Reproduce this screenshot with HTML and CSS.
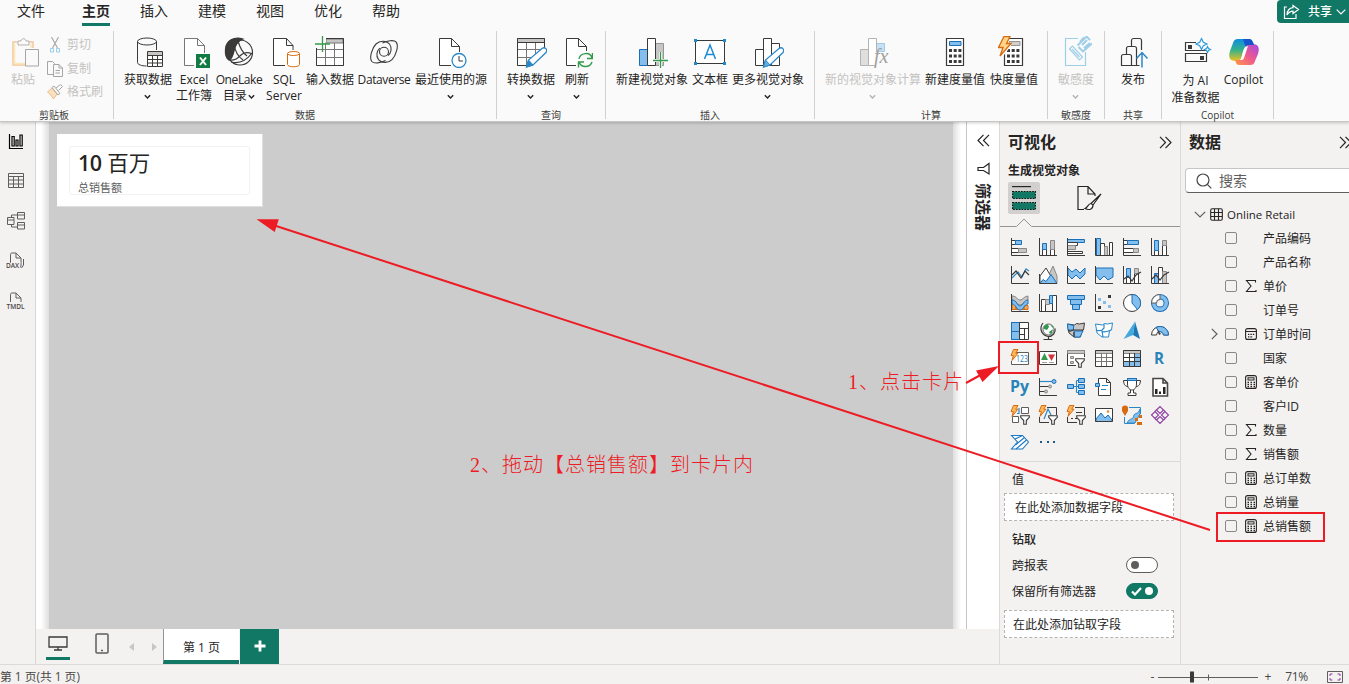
FILE: index.html
```html
<!DOCTYPE html>
<html lang="zh-CN">
<head>
<meta charset="utf-8">
<title>Power BI</title>
<link rel="stylesheet" href="styles.css">
</head>
<body>
<svg class="defs" width="0" height="0" aria-hidden="true">
  <symbol id="bolt" viewBox="0 0 9 12"><path d="M3.500.5h4.500L5.700 4.200H8L2 11.400 3.400 6.600H1z" fill="#ffb85a" stroke="#d86b10"/></symbol>
  <symbol id="calc" viewBox="0 0 12 14"><rect x=".6" y=".6" width="10.8" height="12.8" rx="2" fill="none" stroke="#252423" stroke-width="1.1"/><rect x="3" y="2.8" width="6" height="2.2" fill="none" stroke="#252423"/><path d="M2.500 7.500h7.500M2.500 9.600h7.500M2.500 11.600h7.500" stroke="#252423" stroke-width="1.3" stroke-dasharray="1.5"/></symbol>
  <symbol id="sigma" viewBox="0 0 12 14"><path d="M10.500 3.500V1.500H1.500L6 7 1.500 12.500h9.500v-1.500" fill="none" stroke="#252423" stroke-width="1.1"/></symbol>
  <symbol id="chev" viewBox="0 0 6 5"><path d="M.7 1L3 3.400 5.300 1" fill="none" stroke="currentColor" stroke-width="1.200"/></symbol>
  <symbol id="dbl" viewBox="0 0 13 13"><path d="M1 .8l5.500 5.700L1 12.200M6.500.8L12 6.500l-5.500 5.700" fill="none" stroke="#252423" stroke-width="1.200"/></symbol>
  <symbol id="funnel" viewBox="0 0 10 10"><path d="M.7.7h8.600v1.600L6.300 5.500v3.800H3.700V5.500L.7 2.300z" fill="#fff" stroke="#3b3a39" stroke-width="1.100"/></symbol>
</svg>

<header class="top">
  <nav class="tabs">
    <span class="tab first">文件</span><span class="tab on">主页</span><span class="tab">插入</span><span class="tab">建模</span><span class="tab">视图</span><span class="tab">优化</span><span class="tab">帮助</span>
    <div class="share">
      <svg width="17" height="16" viewBox="0 0 17 16" fill="none" stroke="#fff" stroke-width="1.200"><path d="M4 3H1.500v11.500H13V10"/><path d="M10 1.500l5.500 4-5.500 4V7.200C7 7.200 5.500 8.500 4 11c.2-4 2.500-7 6-7.300z"/></svg>
      <b>共享</b>
      <svg width="10" height="6" viewBox="0 0 10 6" fill="none" stroke="#fff" stroke-width="1.200"><path d="M.7.7L5 5 9.300.7"/></svg>
    </div>
  </nav>
  <div class="ribbon">
    <section class="group g-clip">
      <div class="tools">
        <div class="btn w34 off">
          <svg width="32" height="32" viewBox="0 0 32 32" fill="none"><path d="M10.500 6H6v23h13M21 6h5v6" stroke="#f3c79b" stroke-width="1.500"/><path d="M7.500 8v19.500H19M24 8v4" stroke="#fbe6b8" stroke-width="1.500"/><path d="M11 9V5h3c.5-3 4.500-3 5 0h3v4z" stroke="#b5b3b1" fill="#fafafa"/><path d="M18.500 13.500h13v16.500h-13z" stroke="#a8a6a4" fill="#fafafa"/></svg>
          <span>粘贴</span>
        </div>
        <div class="minis">
          <div><svg width="16" height="16" viewBox="0 0 16 16" fill="none"><path d="M4.500 0l6 11M11.500 0l-6 11" stroke="#a8a6a4" stroke-width="1.100"/><path d="M3.500 11.500h3v3.500h-3zM9.500 11.500h3v3.500h-3z" stroke="#9dcbea"/></svg>剪切</div>
          <div><svg width="16" height="16" viewBox="0 0 16 16" fill="#fafafa" stroke="#a8a6a4"><path d="M.5.5h5l2 2v11h-7z"/><path d="M6.500 3.500h5.500l3.500 3.500v8.500h-9zM12 3.500V7h3.500M8.500 9.500h4.500M8.500 12h4.500"/></svg>复制</div>
          <div><svg width="16" height="16" viewBox="0 0 16 16" fill="none" stroke="#a8a6a4"><path d="M5 4l5 6-3.500 5C4.500 12 3 10 .5 8z" fill="#fbe0bd" stroke="#edbd91"/><path d="M5 3.500l2-1.500 6 7.500-2 1.500zM9 4L13.500.5l2 2L11.500 6.500"/></svg>格式刷</div>
        </div>
      </div>
      <h6>剪贴板</h6>
    </section>

    <section class="group g-data">
      <div class="tools">
        <div class="btn w52">
          <svg width="32" height="32" viewBox="0 0 32 32" fill="none" stroke="#3b3a39"><path d="M5.500 5.500v21c0 2 4 3.500 9 3.500M24.500 5.500V14"/><ellipse cx="15" cy="5.500" rx="9.500" ry="3.500"/><path d="M15.500 15.500h15v15h-15z" fill="#fff"/><path d="M16 16h14v3H16z" fill="#c8c6c4" stroke="none"/><path d="M15.500 19.500h15M15.500 23.500h15M15.500 27h15M20.500 19.500v11M25.500 19.500v11"/></svg>
          <span>获取数据</span><svg class="ch" width="7" height="6"><use href="#chev"/></svg>
        </div>
        <div class="btn w40">
          <svg width="32" height="32" viewBox="0 0 32 32" fill="none" stroke="#797775"><path d="M16 29.500H6.500v-27h13l7 7V17M19.500 2.500v7h7" fill="#fff"/><path d="M18 18h14v14H18z" fill="#107c41" stroke="none"/><path d="M22 21.500l6 7.500M28 21.500L22 29" stroke="#fff" stroke-width="2"/></svg>
          <span>Excel<br>工作簿</span>
        </div>
        <div class="btn w50 lat">
          <svg width="32" height="32" viewBox="0 0 32 32" fill="none" stroke="#3b3a39" stroke-width="1.200"><circle cx="17" cy="16.500" r="12.500"/><path d="M20 3C11 0 3 5 2.500 13c-.5 5 .5 9 3.500 11 3-1 4-5 5-9 1-5 4-10 9-12z" fill="#3b3a39"/><path d="M11 8c1 7 3 12 9 16M15 5c2 7 5 12 9 15M6 24c6 1 9-2 12-5s7-3 11.500-1"/><path d="M8 26c8 2 15-1 21-9"/></svg>
          <span>OneLake<br>目录 <svg width="7" height="6"><use href="#chev"/></svg></span>
        </div>
        <div class="btn w40">
          <svg width="32" height="32" viewBox="0 0 32 32" fill="none" stroke="#3b3a39"><path d="M17 29.500H5.500v-27h13l6.500 7V14M18.500 2.500v7H25" fill="#fff"/><path d="M19.500 17.500v11c0 3 12 3 12 0v-11" fill="#fff" stroke="#d86b10"/><ellipse cx="25.500" cy="17.500" rx="6" ry="2" fill="#fff" stroke="#d86b10"/></svg>
          <span>SQL<br>Server</span>
        </div>
        <div class="btn w52">
          <svg width="32" height="32" viewBox="0 0 32 32" fill="none" stroke="#797775"><path d="M2.500 2.500h27v27h-27z" fill="#fff"/><path d="M12 3h17v4H12z" fill="#c8c6c4"/><path d="M2.500 13.500h27M2.500 21.500h27M11.500 7v22M20.500 7v22"/><path d="M2.500 2.500h27v27h-27z" stroke="#3b3a39"/><path d="M0 0h12v6.500H7V12H0z" fill="#fafafa" stroke="none"/><path d="M8.500 0v16M1 8h15" stroke="#359a4b" stroke-width="1.300"/></svg>
          <span>输入数据</span>
        </div>
        <div class="btn w56 lat">
          <svg width="32" height="32" viewBox="0 0 32 32" fill="none" stroke="#3b3a39" stroke-width="1.100"><circle cx="16" cy="15.800" r="4.500"/><path id="lobe" d="M17.500 24.500C13 27 6 28 3.800 25.500 1 22 4 12 8 8c3.500-3.500 10-4 13.500 0 3 4 1.500 9.500-1.500 11.500"/><use href="#lobe" transform="rotate(180 16 15.800)"/></svg>
          <span>Dataverse</span>
        </div>
        <div class="btn w78">
          <svg width="32" height="32" viewBox="0 0 32 32" fill="none" stroke="#3b3a39"><path d="M16 29.500H4.500v-27h12l8 8V16M16.500 2.500v8h8" fill="#fff"/><circle cx="24" cy="24.500" r="7" fill="#fff" stroke="#2b88c8" stroke-width="1.300"/><path d="M24 20v5h4"/></svg>
          <span>最近使用的源</span><svg class="ch" width="7" height="6"><use href="#chev"/></svg>
        </div>
      </div>
      <h6>数据</h6>
    </section>

    <section class="group g-query">
      <div class="tools">
        <div class="btn w52">
          <svg width="32" height="32" viewBox="0 0 32 32" fill="none" stroke="#797775"><path d="M2.500 2.500h27v27h-27z" fill="#fff"/><path d="M3 3h26v3.500H3z" fill="#c8c6c4" stroke="none"/><path d="M2.500 13.500h27M2.500 21.500h27M11.500 7v22M20.500 7v22"/><path d="M2.500 2.500h27v27h-27zM2.500 6.500h27" stroke="#3b3a39"/><path d="M16 30.500h16V14z" fill="#fafafa" stroke="none"/><path d="M11.500 31l2-7L27 12.500c3-2 6 1 4 4L18 29z" fill="#fff" stroke="#2b88c8" stroke-width="1.300"/><path d="M11.500 31l2-7 4.500 5z" fill="#2b88c8" stroke="#2b88c8"/></svg>
          <span>转换数据</span><svg class="ch" width="7" height="6"><use href="#chev"/></svg>
        </div>
        <div class="btn w40">
          <svg width="32" height="32" viewBox="0 0 32 32" fill="none" stroke="#3b3a39"><path d="M15 29.500H5.500v-27h12l8 8V15M17.500 2.500v8h8" fill="#fff"/><g stroke="#359a4b" stroke-width="1.400"><path d="M18 23c1-6 11-8 13-1M31.500 17v5.500H26M31 26c-2 6-11 6-13 0M17.500 31.500V26H23"/></g></svg>
          <span>刷新</span><svg class="ch" width="7" height="6"><use href="#chev"/></svg>
        </div>
      </div>
      <h6>查询</h6>
    </section>

    <section class="group g-insert">
      <div class="tools">
        <div class="btn w76">
          <svg width="32" height="32" viewBox="0 0 32 32" stroke="#3b3a39"><path d="M3.500 13.500h8v16h-8z" fill="#83beec" stroke="#1a70b8"/><path d="M19.500 7.500h8v22h-8z" fill="#c8c6c4" stroke="#979593"/><path d="M11.500 2.500h8v27h-8z" fill="#fff"/><path d="M24.500 16v16M16 24.500h16" stroke="#fafafa" stroke-width="3"/><path d="M24.500 16v16M17 24.500h15" stroke="#359a4b" stroke-width="1.300"/></svg>
          <span>新建视觉对象</span>
        </div>
        <div class="btn w40">
          <svg width="32" height="32" viewBox="0 0 32 32"><path d="M1.500 4.500h29v23h-29z" fill="#fff" stroke="#3b3a39"/><path d="M10.500 23L16 9l5.500 14M12.500 18.500h7" fill="none" stroke="#1b8ad3" stroke-width="1.500"/><path d="M0 3h3v3H0zM29 3h3v3h-3zM0 26h3v3H0zM29 26h3v3h-3z" fill="#1b8ad3"/></svg>
          <span>文本框</span>
        </div>
        <div class="btn w76">
          <svg width="32" height="32" viewBox="0 0 32 32" stroke="#3b3a39" fill="#fff"><path d="M3.500 13.500h8v16h-8zM19.500 7.500h8v22h-8zM11.500 2.500h8v27h-8z"/><path d="M11.500 31l2-7L27 12.500c3-2 6 1 4 4L18 29z" stroke="#2b88c8" stroke-width="1.300"/><path d="M11.500 31l2-7 4.500 5z" fill="#69afe5" stroke="#2b88c8"/></svg>
          <span>更多视觉对象</span><svg class="ch" width="7" height="6"><use href="#chev"/></svg>
        </div>
      </div>
      <h6>插入</h6>
    </section>

    <section class="group g-calc">
      <div class="tools">
        <div class="btn w100 off">
          <svg width="32" height="32" viewBox="0 0 32 32" stroke="#b5b3b1"><path d="M3.500 13.500h8v16h-8z" fill="#e1dfdd"/><path d="M19.500 7.500h8v8h-8z" fill="#c7e0f4" stroke="#9dcbea"/><path d="M11.500 2.500h8v27h-8z" fill="#fff"/><path d="M18 16h12v15H18z" fill="#fafafa" stroke="none"/><text x="17" y="27" class="fx">fx</text></svg>
          <span>新的视觉对象计算</span><svg class="ch" width="7" height="6"><use href="#chev"/></svg>
        </div>
        <div class="btn w64">
          <svg width="32" height="32" viewBox="0 0 32 32"><path d="M7.500 2.500h17v27h-17z" fill="#fff" stroke="#3b3a39" stroke-width="1.200"/><path d="M10.500 5.500h11.500v4H10.500z" fill="#83beec" stroke="#1a70b8"/><path d="M10 14.500h12.500M10 20h12.500M10 25.500h12.500" stroke="#3b3a39" stroke-width="3" stroke-dasharray="3 1.700"/></svg>
          <span>新建度量值</span>
        </div>
        <div class="btn w54">
          <svg width="32" height="32" viewBox="0 0 32 32"><path d="M6.500 2.500h18v27h-18z" fill="#fff" stroke="#3b3a39" stroke-width="1.200"/><path d="M11 5.500h11v4H11z" fill="#d2d0ce" stroke="#979593"/><path d="M9 14.500h13M9 20h13M9 25.500h13" stroke="#3b3a39" stroke-width="3" stroke-dasharray="3 1.700"/><path d="M0 0h11v7h2v3L6 19v1H0z" fill="#fafafa"/><path d="M6 .5h6L8.500 7.500h4.500L2 20l3-8.500H.5z" fill="#ffd58a" stroke="#d86b10" stroke-width="1.300"/></svg>
          <span>快度量值</span>
        </div>
      </div>
      <h6>计算</h6>
    </section>

    <section class="group g-sens">
      <div class="tools">
        <div class="btn w40 off">
          <svg width="32" height="32" viewBox="0 0 32 32" fill="none" stroke="#9dcfe8" stroke-width="1.200"><path d="M18 2.500H5.500v27h20V16"/><path d="M9.500 13l3-3 10 11-3 3zM12 13l7.500 8"/><path d="M17.500 9.500l9-9 3.500 3.500M18.500 11l4.500 4.500 9-8M22 9l5-5M24 12l6-5M20 6l4-4.500" stroke-width="2"/></svg>
          <span>敏感度</span><svg class="ch" width="7" height="6"><use href="#chev"/></svg>
        </div>
      </div>
      <h6>敏感度</h6>
    </section>

    <section class="group g-pub">
      <div class="tools">
        <div class="btn w40">
          <svg width="32" height="32" viewBox="0 0 32 32" fill="none" stroke="#3b3a39" stroke-width="1.200"><path d="M4.500 29.500v-9c0-1 1-2 2-2h6c1 0 2 1 2 2v9zM9.500 18v-5.500c0-1 1-2 2-2h6c1 0 2 1 2 2v17h-5M14.500 10V4.500c0-1 1-2 2-2h6c1 0 2 1 2 2V14M19.500 29.500h3"/><path d="M25 31.500V17M19.500 22.500l5.500-6 5.500 6" stroke="#2b88c8" stroke-width="1.500"/></svg>
          <span>发布</span>
        </div>
      </div>
      <h6>共享</h6>
    </section>

    <section class="group g-cop">
      <div class="tools">
        <div class="btn w52 ai">
          <svg width="32" height="32" viewBox="0 0 32 32" fill="none" stroke="#3b3a39" stroke-width="1.200"><path d="M16 6.500H5.500v8h21M5.500 17.500h21v8h-21z"/><path d="M8 9h4v4H8zM20 20h4v4h-4z" fill="#3b3a39" stroke="none"/><path d="M21.500 2.500l1.800 3.700 3.700 1.800-3.700 1.800-1.800 3.700-1.800-3.700L16 8l3.700-1.800zM27.500 10.500l1 2 2 1-2 1-1 2-1-2-2-1 2-1z" fill="#fafafa" stroke="#2b9bdc"/></svg>
          <span>为 AI<br>准备数据</span>
        </div>
        <div class="btn w44">
          <svg width="32" height="32" viewBox="0 0 32 32"><defs><linearGradient id="c1" x1="0" y1="0" x2="0" y2="1"><stop offset="0" stop-color="#0a8ee0"/><stop offset=".5" stop-color="#35b28a"/><stop offset="1" stop-color="#f4c11c"/></linearGradient><linearGradient id="c2" x1="1" y1="0" x2="0" y2="1"><stop offset="0" stop-color="#a348e8"/><stop offset=".5" stop-color="#ee5a8d"/><stop offset="1" stop-color="#ff9a45"/></linearGradient></defs><path d="M10 3h11c3 0 4 3 5 6h-6c-2 0-3 1-3.500 3L13 23c-1 3-3 2-5 2-6 0-8-3-6-10l3-8c1-3 2-4 5-4z" fill="url(#c1)"/><path d="M22 29H11c-3 0-3-3-4-5h4c2 0 3-1 3.500-3L18 11c1-3 3-3 6-3 6 0 8 3 6 10l-3 7c-1 3-2 4-5 4z" fill="url(#c2)"/><path d="M15 3h6c3 0 4 3 5 6h-6c-1 0-2 1-2.500 2z" fill="#1655ce"/><path d="M20 10l-4 12c-.6 2-1.800 2-4.500 2 2-1 2.500-4 3-7 .5-3 2-6 5.500-7z" fill="#fff"/></svg>
          <span>Copilot</span>
        </div>
      </div>
      <h6>Copilot</h6>
    </section>
  </div>
</header>

<main class="work">
  <aside class="rail">
    <svg width="20" height="20" viewBox="0 0 20 20" fill="none" stroke="#000" stroke-width="1.200"><path d="M3.500 3v14.500H17"/><path d="M6 5.500h2.200v9.500H6zM10 9h2v6h-2zM14 4h2.200v11H14z"/></svg>
    <svg width="20" height="20" viewBox="0 0 20 20" fill="none" stroke="#605e5c"><path d="M2.500 2.500h15v14h-15zM2.500 5.500h15M2.500 9h15M2.500 13h15M7.500 5.500v11M12.500 5.500v11"/></svg>
    <svg width="20" height="20" viewBox="0 0 20 20" fill="none" stroke="#605e5c"><path d="M1.500 6.500h6.500v7H1.500zM1.500 9h6.500M11.500 1.500h7v6.500h-7zM11.500 4h7M11.500 11.500h7v6.500h-7zM11.500 14h7M5.500 6.500V4h6M5.500 13.500V16h6"/></svg>
    <svg width="24" height="20" viewBox="0 0 24 20" fill="none" stroke="#605e5c"><path d="M6.500 12V3.500c0-1 .5-1.500 1.500-1.500h4l5 5v7c0 1.500-.5 3-2 3M12 2v5h5M19.500 8v6l-2 3"/><text class="tiny" x="2" y="17">DAX</text></svg>
    <svg width="24" height="20" viewBox="0 0 24 20" fill="none" stroke="#605e5c"><path d="M6.500 11V3.500c0-1 .5-1.500 1.500-1.500h4l5 5v4M12 2v5h5"/><text class="tiny" x="2.500" y="17.500">TMDL</text></svg>
  </aside>

  <div class="center">
    <div class="stage">
      <div class="canvas">
        <div class="card"><div class="card-in"><strong><b>10</b> 百万</strong><small>总销售额</small></div></div>
      </div>
      <div class="filters">
        <svg class="flip" width="13" height="13"><use href="#dbl"/></svg>
        <svg width="14" height="14" viewBox="0 0 14 14"><path d="M13 1.500v10.500L7.500 8.500H2v-3h5.500z" fill="none" stroke="#252423" stroke-width="1.200"/></svg>
        <b>筛选器</b>
      </div>
    </div>
    <div class="pages">
      <div class="dev on"><svg width="20" height="16" viewBox="0 0 20 16" fill="none" stroke="#3b3a39" stroke-width="1.300"><path d="M1 2h18v10H1zM10 12v3M6 15h8"/></svg></div>
      <div class="dev phone"><svg width="14" height="22" viewBox="0 0 14 22" fill="none" stroke="#605e5c" stroke-width="1.500"><rect x="1" y="1" width="12" height="19" rx="1"/><path d="M6 17.500h2"/></svg></div>
      <svg class="nav1" width="5" height="8" viewBox="0 0 5 8"><path d="M5 0v8L0 4z" fill="#c8c6c4"/></svg>
      <svg class="nav2" width="5" height="8" viewBox="0 0 5 8"><path d="M0 0v8l5-4z" fill="#c8c6c4"/></svg>
      <div class="page">第 1 页</div>
      <div class="add"><svg width="12" height="12" viewBox="0 0 12 12"><path d="M6 .5v11M.5 6h11" stroke="#fff" stroke-width="2.800"/></svg></div>
    </div>
  </div>

  <aside class="viz">
    <div class="head"><h2>可视化</h2><svg width="13" height="13"><use href="#dbl"/></svg></div>
    <h3>生成视觉对象</h3>
    <div class="modes">
      <div class="mode on"><svg width="24" height="25" viewBox="0 0 24 25"><path d="M0 .6h19" stroke="#252423" stroke-width="1.200"/><path d="M.6 5.500h22.800v7H.6zM.6 16.500h22.800v7H.6z" fill="#117865" stroke="#111" stroke-width="1.200" stroke-dasharray="1.600 1.200"/></svg></div>
      <div class="mode"><svg width="25" height="26" viewBox="0 0 25 26" fill="none" stroke="#252423" stroke-width="1.200"><path d="M7 24.500H1V1.500h10l7 7.500V11M11 1.500V9h7"/><path d="M24 9l-8 11-2-1.500zM14 18.500c-3 0-3 4-6 5 4 2 8 1 8-3.500" fill="#fff"/></svg></div>
    </div>
    <svg class="notch" width="180" height="9" viewBox="0 0 180 9"><path d="M0 8.500h16.500L24 1l7.500 7.500H180" fill="none" stroke="#979593"/></svg>
    <div class="gallery">
      <!-- bars and columns -->
      <svg viewBox="0 0 20 20"><path class="w" d="M1.500 3.500h4v4h-4zM1.500 11.500h7v4h-7z"/><path class="b" d="M5.500 3.500h6v4h-6z"/><path class="g" d="M8.500 11.500h8v4h-8z"/><path class="ax" d="M1.500 1v17.500H19"/></svg>
      <svg viewBox="0 0 20 20"><path class="w" d="M4.500 12.500h4v6h-4zM12.500 12.500h4v6h-4z"/><path class="b" d="M4.500 6.500h4v6h-4z"/><path class="g" d="M12.500 3.500h4v9h-4z"/><path class="ax" d="M1.500 1v17.500H19"/></svg>
      <svg viewBox="0 0 20 20"><path class="b" d="M1.500 2.500h17v3h-17z"/><path class="w" d="M1.500 5.500h10v3h-10z"/><path class="g" d="M1.500 8.500h8v4h-8z"/><path class="w" d="M1.500 14.500h15v2h-15z"/><path class="ax" d="M1.500 1v17.500H19"/></svg>
      <svg viewBox="0 0 20 20"><path class="b" d="M2.500 1.500h4v17h-4z"/><path class="w" d="M6.500 6.500h4v12h-4z"/><path class="g" d="M10.500 9.500h3v9h-3z"/><path class="w" d="M15.500 5.500h3v13h-3z"/><path class="ax" d="M1.500 1v17.500H19"/></svg>
      <svg viewBox="0 0 20 20"><path class="w" d="M1.500 3.500h4v4h-4zM1.500 11.500h10v4h-10z"/><path class="b" d="M5.500 3.500h11v4h-11z"/><path class="g" d="M11.500 11.500h5v4h-5z"/><path class="ax" d="M1.500 1v17.500H19"/></svg>
      <svg viewBox="0 0 20 20"><path class="w" d="M4.500 13.500h4v5h-4zM12.500 8.500h4v10h-4z"/><path class="b" d="M4.500 3.500h4v10h-4z"/><path class="g" d="M12.500 3.500h4v5h-4z"/><path class="ax" d="M1.500 1v17.500H19"/></svg>
      <!-- lines and areas -->
      <svg viewBox="0 0 20 20"><path class="bl" d="M2 13l6-6 4 5 4-8 3 2"/><path class="ln" d="M2 10l4-4 5 7 4-7 4 4"/><path class="ax" d="M1.500 1v17.500H19"/></svg>
      <svg viewBox="0 0 20 20"><path class="g" d="M9 14l6-13 4 10v7h-6z"/><path class="w" d="M2 11l6-8 6 10-6 5H2z"/><path class="b" d="M2 18.500l3-4 3 2 5-7 6 9z"/><path class="ax" d="M1.500 9v9.500H19"/></svg>
      <svg viewBox="0 0 20 20"><path class="b" d="M2 3l4 4 4-3 4 4 5-5v6l-5 5-4-4-4 4-4-4z"/><path class="ax" d="M1.500 1v17.500H19"/></svg>
      <svg viewBox="0 0 20 20"><path class="b" d="M2 3h17v9l-5 3-4-4-4 4-4-5z"/><path class="ax" d="M1.500 1v17.500H19"/></svg>
      <svg viewBox="0 0 20 20"><path class="w" d="M4.500 12.500h4v6h-4zM12.500 8.500h4v10h-4z"/><path class="b" d="M4.500 3.500h4v9h-4z"/><path class="g" d="M12.500 3.500h4v5h-4z"/><path class="ln" d="M2 14l4-3 4 5 4-6 5-3"/><path class="ax" d="M1.500 1v17.500H19"/></svg>
      <svg viewBox="0 0 20 20"><path class="b" d="M4.500 8.500h4v10h-4z"/><path class="w" d="M8.500 2.500h4v16h-4z"/><path class="g" d="M12.500 6.500h4v12h-4z"/><path class="ln" d="M2 14l4-4 4 5 4-5 5-3"/><path class="ax" d="M1.500 1v17.500H19"/></svg>
      <!-- ribbon, waterfall, funnel, scatter, pie, donut -->
      <svg viewBox="0 0 20 20"><path d="M2 10.500h4v6H2zM14 12.500h4v4h-4zM6 14.500h8v2H6z" fill="#f2a65a" stroke="#d86b10"/><path class="g" d="M2 3c5 0 5 4 8 4s4-4 8-4v4c-4 0-4 5-8 5s-4-5-8-5z"/><path class="b" d="M2 7c5 0 5 6 8 6s4-6 8-6v4c-4 0-4 6-8 6s-4-6-8-6z"/><path class="ax" d="M1.500 1v17.500H19"/></svg>
      <svg viewBox="0 0 20 20"><path class="w" d="M3.500 6.500h4v12h-4zM14.500 2.500h4v16h-4z"/><path class="g" d="M7.500 6.500h4v5h-4z"/><path class="b" d="M11.500 2.500h3v8h-3z"/><path class="ax" d="M1.500 1v17.500H19"/></svg>
      <svg viewBox="0 0 20 20"><path class="b" d="M1.500 2.500h17v4h-17zM4.500 6.500h11v5h-11zM6.500 11.500h7v5h-7z"/></svg>
      <svg viewBox="0 0 20 20"><path d="M14 2h3v3h-3zM4 13h3v3H4z" fill="#3b3a39"/><path d="M4 5h3v3H4zM9 8h3v3H9zM14 12h3v3h-3z" fill="#83beec"/><path class="ax" d="M1.500 1v17.500H19"/></svg>
      <svg viewBox="0 0 20 20"><circle class="w" cx="10" cy="10" r="8.500"/><path class="b" d="M10 1.500a8.500 8.500 0 0 1 5.500 15L10 10z"/></svg>
      <svg viewBox="0 0 20 20"><circle cx="10" cy="10" r="6.300" fill="none" stroke="#1a70b8" stroke-width="5.500"/><circle cx="10" cy="10" r="6.300" fill="none" stroke="#83beec" stroke-width="3.500"/><path d="M1.500 10A8.500 8.500 0 0 1 10 1.500v5A3.500 3.500 0 0 0 6.500 10z" fill="#fff" stroke="#605e5c"/></svg>
      <!-- treemap and maps -->
      <svg viewBox="0 0 20 20"><path class="w" d="M1.500 1.500h17v17h-17z"/><path class="b" d="M1.500 1.500h8v9h-8zM1.500 10.500h8v8h-8z"/><path class="ax" d="M9.500 7.500h9M14.500 7.500v11M9.500 13.500h5M9.500 1.500v17"/></svg>
      <svg viewBox="0 0 20 20"><circle cx="10.500" cy="8.500" r="5.500" fill="#fff" stroke="#605e5c"/><path d="M6 5l4-2 1 3-2 3-3-1zM11 11l4-3-1 4-2 1zM12 4l3 1v2z" fill="#2f9a50"/><path class="ln" d="M5 2c-4 5-2 12 5 13.500 5 0 8-4 7-8M10.500 15.500v3M5.500 18.500h9"/></svg>
      <svg viewBox="0 0 20 20"><path d="M1.500 3l7 1 2-1.500 3 .5 5-1-1 7-2 1-1 6H8l-5-4z" fill="#c8c6c4" stroke="#3b3a39"/><path class="b" d="M1.500 3l6 1.500V9H2zM8 10h9l-3 6H8z"/><path class="ln" d="M2 9c3 3 5-1 6 0h9M8 11v5"/></svg>
      <svg viewBox="0 0 20 20"><path d="M1.500 3l7 1 2-1.500 3 .5 5-1-1 7-2 1-1 6H8l-5-4z" fill="#fff" stroke="#2b88c8"/><path class="bl" d="M2 9c3 2 5-1 6 1s4 1 9-1M8 10l1 6M10 3v4l-2 2"/></svg>
      <svg viewBox="0 0 20 20"><path d="M13 .5L18 18l-7-4z" fill="#1b78b4"/><path d="M13 .5L1.500 18l9.500-4z" fill="#44a9dc"/></svg>
      <svg viewBox="0 0 20 20"><path d="M1.500 14a8.500 8.500 0 0 1 17 0h-5a3.500 3.500 0 0 0-7 0z" fill="#fff" stroke="#3b3a39"/><path class="b" d="M6 6.500a8.500 8.500 0 0 1 12.500 7.500h-5A4 4 0 0 0 9 10.500z"/><path d="M9 14l-2-6 4 5z" fill="#3b3a39"/></svg>
      <!-- cards and tables -->
      <svg class="up" viewBox="0 0 20 20"><path d="M1.500 4.500h17v12h-17z" fill="#fff" stroke="#605e5c"/><path d="M0 2h6v11H0z" fill="#f3f2f1"/><text x="6" y="14" class="num" textLength="12" lengthAdjust="spacingAndGlyphs">123</text><use href="#bolt" x="0" y="1" width="9" height="12"/></svg>
      <svg class="up" viewBox="0 0 20 20"><path d="M1.500 3.500h17v13h-17z" fill="#fff" stroke="#3b3a39"/><path d="M3 12l3.500-7 3.500 7z" fill="#359a4b"/><path d="M10 6.500h7L13.500 13z" fill="#d13438"/><path d="M4 14.500h5M11 14.500h5" stroke="#a19f9d"/></svg>
      <svg class="up" viewBox="0 0 20 20"><path d="M18.500 9V2.500h-17v15H10" fill="#fff" stroke="#3b3a39"/><path class="g" d="M1.500 2.500h17v3h-17zM4.500 8.500h3v2h-3zM4.500 13.500h3v2h-3z"/><use href="#funnel" x="9" y="10" width="10" height="10"/></svg>
      <svg class="up" viewBox="0 0 20 20"><path d="M1.500 2.500h17v16h-17z" fill="#fff"/><path class="g" d="M1.500 2.500h17v3h-17z"/><path d="M1.500 9.500h17M1.500 13.500h17M7.500 5v13M12.500 5v13" stroke="#797775"/><path class="ax" d="M1.500 2.500h17v16h-17z"/></svg>
      <svg class="up" viewBox="0 0 20 20"><path d="M1.500 2.500h17v16h-17z" fill="#fff"/><path class="b" d="M12.500 5.500h6v13h-17v-5h11z"/><path class="g" d="M1.500 2.500h17v3h-17z"/><path class="ax" d="M1.500 2.500h17v16h-17zM1.500 9.500h17M1.500 13.500h17M7.500 5v13M12.500 5v13"/></svg>
      <svg class="up" viewBox="0 0 20 20"><text x="4" y="16" class="lang" textLength="10" lengthAdjust="spacingAndGlyphs">R</text></svg>
      <!-- scripts and AI -->
      <svg viewBox="0 0 20 20"><text x="0" y="14.500" class="lang" textLength="19" lengthAdjust="spacingAndGlyphs">Py</text></svg>
      <svg viewBox="0 0 20 20"><path class="bl" d="M2 4.500h12"/><circle class="b" cx="16" cy="4.500" r="2"/><path class="ln" d="M2 9.500h9M2 14.500h5"/><circle class="g" cx="12" cy="9.500" r="1.500"/><circle class="g" cx="8" cy="14.500" r="1.500"/><path class="ax" d="M1.500 1v17.500H19"/></svg>
      <svg viewBox="0 0 20 20"><path class="bl" d="M8 9.500h5M10.500 3.500v12M10.500 3.500H13M10.500 15.500H13"/><path class="b" d="M1.500 7.500h6v4h-6zM12.500 1.500h6v4h-6zM12.500 7.500h6v4h-6zM12.500 13.500h6v4h-6z"/></svg>
      <svg viewBox="0 0 20 20"><path d="M4.500 1.500h8l4 4v13h-12zM12.500 1.500v4h4" fill="#fff" stroke="#3b3a39"/><path class="b" d="M1.500 6.500h4v3h-4z"/><path class="bl" d="M8 8.500h6M7 12.500h5"/></svg>
      <svg viewBox="0 0 20 20"><path class="w" d="M5.500 1.500h9V7c0 8-9 8-9 0zM5 3.500H1.500C2 8 3 9 6 9.500M15 3.500h3.500C18 8 17 9 14 9.500M8.500 13v3H6v2.500h8V16h-2.500v-3"/><path class="b" d="M5.500 1.500h9v2h-9z"/></svg>
      <svg viewBox="0 0 20 20"><path d="M3 1.500h10l4.500 4.500v13H3zM13 1.500V6h4.500" fill="#fff" stroke="#484644" stroke-width="1.600"/><path d="M5 12h2.500v5H5zM9 14.500h2V17H9zM13 10h2.500v7H13z" fill="#252423"/></svg>
      <!-- slicers, image, map, apps -->
      <svg viewBox="0 0 20 20"><path d="M11.500 2.500h7v6h-7zM2.500 11.500h6v6h-6z" fill="#fff" stroke="#605e5c"/><path class="bl" d="M7 8.500h2V3"/><use href="#bolt" width="9" height="12"/><use href="#funnel" x="10" y="10" width="10" height="10"/></svg>
      <svg viewBox="0 0 20 20"><path d="M9 2.500h9.500V10M1.500 12v5.500H11" fill="none" stroke="#3b3a39"/><path class="bl" d="M6 14l4-10 4 8" stroke-width="1.500"/><use href="#bolt" width="9" height="12"/><use href="#funnel" x="10" y="10" width="10" height="10"/></svg>
      <svg viewBox="0 0 20 20"><path d="M9 2.500h9.500V10M1.500 12v5.500H11M10 7.500h6M9 13.500h2M5 13.500h2" fill="none" stroke="#3b3a39"/><use href="#bolt" width="9" height="12"/><use href="#funnel" x="10" y="10" width="10" height="10"/></svg>
      <svg viewBox="0 0 20 20"><path d="M1.500 3.500h17v13h-17z" fill="#fff"/><path class="b" d="M2 14l5-6 4 5 3-3 4 5v1.500H2z"/><path class="ax" d="M1.500 3.500h17v13h-17z"/><circle cx="14" cy="6.500" r="1.300" fill="#e88b2c"/></svg>
      <svg viewBox="0 0 20 20"><path d="M7 2.500h11.500V9M2.500 12v6.500h10" fill="none" stroke="#2b88c8"/><path d="M5 18c3-6 6-2 7-8 2-3 4 0 6-6v5l-5 9z" fill="#83beec" stroke="#2b88c8"/><path d="M0 3q0-2.500 3-2.500T6 3v3L3 11 0 6zM13 13h3v3h-3zM17 10h3v3h-3zM15 17h5v3h-5z" fill="#d86b10"/></svg>
      <svg viewBox="0 0 20 20" fill="none" stroke="#8b3f9f" stroke-width="1.100"><path d="M6.500 5L10 1.500 13.500 5 10 8.500zM6.500 15l3.500-3.500 3.500 3.500-3.500 3.500zM1.500 10L5 6.500 8.500 10 5 13.500zM11.500 10L15 6.500l3.500 3.500-3.500 3.500z"/><path d="M6.500 5L5 6.500M13.500 5L15 6.500M6.500 15L5 13.500M13.500 15l1.500-1.500"/></svg>
      <svg viewBox="0 0 20 20" fill="#fff" stroke="#1b78c4" stroke-width="1.100"><path d="M1.500 2.500h11L18.500 9l-6 7h-11l6-7z"/><path d="M5 6l7.500-3.500M5.500 12l9-7.500M6 16l10.500-9" fill="none"/></svg>
      <svg viewBox="0 0 20 20"><path d="M2 8h2v2H2zM9 8h2v2H9zM15 8h2v2h-2z" fill="#1b5c8c"/></svg>
    </div>
    <div class="wells">
      <p>值</p>
      <div class="drop d1">在此处添加数据字段</div>
      <p class="drill">钻取</p>
      <div class="opt"><span>跨报表</span><i class="tog"></i></div>
      <div class="opt"><span>保留所有筛选器</span><i class="tog yes"><svg width="11" height="9" viewBox="0 0 11 9"><path d="M1 4.500l3 3L10 1" fill="none" stroke="#fff" stroke-width="2.200"/></svg></i></div>
      <div class="drop d2">在此处添加钻取字段</div>
    </div>
  </aside>

  <aside class="data">
    <div class="head"><h2>数据</h2><svg width="13" height="13"><use href="#dbl"/></svg></div>
    <div class="search"><svg width="16" height="16" viewBox="0 0 16 16" fill="none" stroke="#484644" stroke-width="1.200"><circle cx="7" cy="7" r="6"/><path d="M11.300 11.300L15.300 15.300"/></svg>搜索</div>
    <ul class="tree">
      <li class="root"><svg width="12" height="7" viewBox="0 0 12 7" fill="none" stroke="#605e5c" stroke-width="1.200"><path d="M.8.8L6 6l5.200-5.200"/></svg><svg width="13" height="13" viewBox="0 0 13 13" fill="none" stroke="#252423" stroke-width="1.100"><rect x=".7" y=".7" width="11.600" height="11.600" rx="1.500"/><path d="M4.500 1v11M8.500 1v11M1 4.500h11M1 8.500h11"/></svg>Online Retail</li>
      <li><s></s><i></i><b></b>产品编码</li>
      <li><s></s><i></i><b></b>产品名称</li>
      <li><s></s><i></i><b><svg width="12" height="14"><use href="#sigma"/></svg></b>单价</li>
      <li><s></s><i></i><b></b>订单号</li>
      <li><s><svg width="7" height="12" viewBox="0 0 7 12"><path d="M.8.8L6 6 .8 11.200" fill="none" stroke="#605e5c" stroke-width="1.200"/></svg></s><i></i><b><svg width="12" height="14" viewBox="0 0 12 14"><rect x=".6" y="1.600" width="10.800" height="10.800" rx="2" fill="none" stroke="#252423" stroke-width="1.100"/><path d="M.6 4.500h10.800" stroke="#252423"/><path d="M3 7.300h6.500M3 9.800h5" stroke="#252423" stroke-width="1.300" stroke-dasharray="1.400 1"/></svg></b>订单时间</li>
      <li><s></s><i></i><b></b>国家</li>
      <li><s></s><i></i><b><svg width="12" height="14"><use href="#calc"/></svg></b>客单价</li>
      <li><s></s><i></i><b></b>客户ID</li>
      <li><s></s><i></i><b><svg width="12" height="14"><use href="#sigma"/></svg></b>数量</li>
      <li><s></s><i></i><b><svg width="12" height="14"><use href="#sigma"/></svg></b>销售额</li>
      <li><s></s><i></i><b><svg width="12" height="14"><use href="#calc"/></svg></b>总订单数</li>
      <li><s></s><i></i><b><svg width="12" height="14"><use href="#calc"/></svg></b>总销量</li>
      <li><s></s><i></i><b><svg width="12" height="14"><use href="#calc"/></svg></b>总销售额</li>
    </ul>
  </aside>
</main>

<footer class="status">
  <span class="count">第 1 页(共 1 页)</span>
  <div class="zoom"><span>-</span><svg class="slider" width="100" height="12" viewBox="0 0 100 12"><path d="M0 6.500h100M50.500 3.500v6" stroke="#605e5c"/><path d="M32 .5h4v11h-4z" fill="#3b3a39"/></svg><span>+</span><span class="pct">71%</span><svg width="16" height="12" viewBox="0 0 16 12" fill="none"><path d="M.5.5h15v11H.5z" stroke="#605e5c"/><path d="M3 5V3h2.500M10.500 3H13v2M13 7v2h-2.500M5.500 9H3V7" stroke="#8b3f9f"/></svg></div>
</footer>

<svg class="notes" width="1349" height="684" viewBox="0 0 1349 684">
  <g fill="none" stroke="#ed1c24" stroke-width="2"><path d="M1210 530L270 224M966 383l20-11"/><path d="M999 342h39v31h-39zM1217 513h107v28h-107z"/></g>
  <path d="M256.500 219.300h22.300L274.700 232zM999 366l-16.500 16-6.500-11.500z" fill="#ed1c24"/>
  <text x="848" y="389" textLength="115">1、点击卡片</text>
  <text x="470" y="472" textLength="283">2、拖动【总销售额】到卡片内</text>
</svg>
</body>
</html>
```
FILE: styles.css
```css
* { box-sizing: border-box; }
body {
  margin: 0; width: 1349px; height: 684px; overflow: hidden;
  display: flex; flex-direction: column; position: relative;
  font: 12px/16px "Open Sans", "Noto Sans CJK SC", sans-serif;
  color: #252423; background: #f3f2f1;
}
svg { display: block; flex: none; }
.defs { position: absolute; }
h2, h3, h6, p, ul { margin: 0; padding: 0; }

/* header */
.top { height: 122px; flex: none; background: #fafafa; border-bottom: 1px solid #c8c6c4; box-shadow: 0 1px 3px rgba(0,0,0,.2); z-index: 1; }
.tabs { height: 31px; display: flex; gap: 30px; padding-left: 17px; font-size: 14px; line-height: 22px; }
.tab { height: 26px; width: 28px; white-space: nowrap; }
.tab.first { margin-right: 7px; }
.tab.on { font-weight: 700; border-bottom: 3px solid #117865; }
.share { margin-left: auto; width: 72px; height: 23px; background: #117865; color: #fff; border-radius: 4px 0 0 4px; display: flex; align-items: center; padding-left: 6px; font-size: 12px; }
.share b { margin: 0 4px 0 8px; font-weight: 500; white-space: nowrap; }
.ribbon { display: flex; height: 88px; }
.group { flex: none; border-right: 1px solid #d2d0ce; display: flex; flex-direction: column; align-items: center; padding-top: 5px; }
.group h6 { font-size: 10px; line-height: 12px; font-weight: 400; color: #3b3a39; margin-top: 2px; height: 10px; }
.tools { display: flex; height: 71px; }
.g-clip { width: 114px; } .g-data { width: 383px; } .g-query { width: 109px; } .g-insert { width: 209px; }
.g-data .tools, .g-calc .tools { padding-left: 2px; }
.g-clip h6 { padding-right: 5px; }
.g-calc { width: 233px; } .g-sens, .g-pub { width: 57px; } .g-cop { width: 112px; }
.btn { display: flex; flex-direction: column; align-items: center; text-align: center; white-space: nowrap; line-height: 16px; }
.btn > span { margin-top: 4px; }
.lat > span { letter-spacing: -.4px; }
.ai > span { line-height: 17px; }
.btn > span svg { display: inline-block; vertical-align: 0; margin-left: -1px; }
.btn .ch { margin: 6px 1px 0 0; }
.off, .minis { color: #c4c2c0; }
.off .ch { color: #b5b3b1; }
.w34 { width: 34px; } .w40 { width: 40px; } .w44 { width: 44px; } .w50 { width: 50px; } .w52 { width: 52px; } .w54 { width: 54px; }
.w56 { width: 56px; } .w64 { width: 64px; } .w76 { width: 76px; } .w78 { width: 78px; } .w100 { width: 100px; }
.g-clip .tools { align-self: flex-start; padding-left: 6px; }
.minis { padding-left: 7px; display: flex; flex-direction: column; }
.minis div { display: flex; align-items: center; gap: 4px; height: 23px; white-space: nowrap; }
.minis div:first-child { height: 18px; margin-bottom: 3px; }
.fx { font: italic 20px "Liberation Serif", serif; fill: #a19f9d; stroke: none; }

/* work area */
.work { flex: 1; display: flex; min-height: 0; }
.rail { width: 36px; flex: none; border-right: 1px solid #d8d6d4; display: flex; flex-direction: column; align-items: center; gap: 20px; padding: 9px 4px 0 0; }
.tiny { font: 600 6.500px "Open Sans", sans-serif; fill: #484644; stroke: #f3f2f1; stroke-width: 2px; paint-order: stroke; }
.center { width: 963px; flex: none; display: flex; flex-direction: column; }
.stage { height: 507px; flex: none; display: flex; background: linear-gradient(90deg, #fff 0 5px, #dedede 13px, #dedede 917px, #fff 925px); }
.canvas { width: 904px; flex: none; margin-left: 13px; background: #ccc; padding: 12px 8px; }
.card { width: 206px; height: 73px; background: #fff; padding: 12px; border: 0 solid #e1dfdd; border-width: 0 1px 1px 0; }
.card-in { width: 181px; height: 49px; border: 1px solid #f3f2f1; border-radius: 3px; padding-left: 8px; display: flex; flex-direction: column; }
.card strong { font-size: 21.500px; line-height: 31px; font-weight: 400; }
.card strong b { font-weight: 600; letter-spacing: -.5px; }
.card small { font-size: 11px; line-height: 20px; height: 17px; color: #605e5c; }
.filters { width: 33px; flex: none; margin-left: 13px; background: #fff; border-left: 1px solid #c8c6c4; display: flex; flex-direction: column; align-items: center; padding-top: 12px; }
.flip { transform: scaleX(-1); margin-bottom: 15px; }
.filters b { writing-mode: vertical-rl; text-orientation: sideways; font-size: 16px; line-height: 20px; margin-top: 7px; }
.pages { height: 35px; flex: none; display: flex; }
.dev { width: 24px; margin-left: 10px; display: flex; justify-content: center; padding-top: 6px; height: 31px; }
.dev.on { border-bottom: 3px solid #117865; }
.dev.phone { margin-left: 20px; padding-top: 4px; }
.nav1 { margin: 14px 0 0 15px; } .nav2 { margin: 14px 0 0 18px; }
.page { margin-left: 6px; width: 76px; height: 35px; background: #fff; border-left: 1px solid #979593; border-bottom: 4px solid #117865; text-align: center; line-height: 37px; }
.add { margin-left: 1px; width: 39px; background: #117865; display: flex; justify-content: center; padding-top: 11px; }

/* visualizations pane */
.viz { width: 182px; flex: none; border: 0 solid #dcdad8; border-width: 0 1px; display: flex; flex-direction: column; }
.head { display: flex; justify-content: space-between; align-items: center; height: 40px; padding: 0 8px; }
.head h2 { font-size: 16px; line-height: 20px; font-weight: 700; white-space: nowrap; }
.viz h3 { font-size: 12px; line-height: 18px; margin: 0 8px; height: 20px; font-weight: 700; }
.modes { display: flex; gap: 33px; padding-left: 8px; }
.mode { width: 32px; height: 32px; display: flex; align-items: center; justify-content: center; }
.mode.on { background: #d2d0ce; border-radius: 2px; }
.notch { margin-top: 4px; }
.gallery { display: grid; grid-template-columns: repeat(6, 28px); grid-auto-rows: 28px; margin: 6px 0 0 6px; place-items: center; }
.gallery svg { width: 20px; height: 20px; overflow: visible; }
.gallery .up { margin-bottom: 2px; }
.b { fill: #83beec; stroke: #1a70b8; } .g { fill: #c8c6c4; stroke: #8a8886; } .w { fill: #fff; stroke: #3b3a39; }
.ax, .ln { fill: none; stroke: #3b3a39; } .ln { stroke-width: 1.200; } .bl { fill: none; stroke: #2b88c8; stroke-width: 1.200; }
.num { font: 9px "Open Sans", sans-serif; fill: #1b78b4; }
.lang { font: 700 16px "Open Sans", sans-serif; fill: #2884b8; }
.wells { border-top: 1px solid #dcdad8; margin-top: 4px; padding: 8px 6px 0 4px; }
.wells p, .opt { padding-left: 8px; line-height: 20px; }
.drop { height: 28px; background: #fff; border: 1px dashed #b5b3b1; line-height: 27px; }
.d1 { margin-top: 3px; padding-left: 10px; } .d2 { margin-top: 6px; padding-left: 8px; }
.wells .drill { margin-top: 9px; font-weight: 500; }
.opt { display: flex; justify-content: space-between; align-items: center; height: 26px; padding-right: 16px; }
.opt span { padding-top: 2px; }
.wells .drill + .opt { margin-top: 2px; }
.tog { width: 32px; height: 16px; border: 1px solid #605e5c; border-radius: 8px; background: #fff; display: flex; align-items: center; padding-left: 4px; }
.tog::after { content: ""; width: 8px; height: 8px; border-radius: 50%; background: #605e5c; }
.tog.yes { background: #117865; border-color: #117865; gap: 3px; }
.tog.yes::after { background: #fff; }

/* data pane */
.data { width: 168px; flex: none; overflow: hidden; }
.data .head { width: 180px; padding-right: 20px; }
.data .head svg { margin-right: -11px; }
.search { width: 175px; height: 25px; margin: 6px 0 0 4px; border: 1px solid #c8c6c4; border-bottom-color: #605e5c; border-radius: 4px; background: #fff; display: flex; align-items: center; gap: 7px; padding-left: 10px; font-size: 14px; color: #605e5c; }
.tree { list-style: none; margin-top: 10px; }
.tree li { height: 24px; display: flex; align-items: center; padding-left: 30px; white-space: nowrap; }
.tree .root { padding-left: 13px; gap: 4px; font-size: 11.500px; padding-bottom: 1px; }
.tree s { width: 14px; display: flex; text-decoration: none; margin-bottom: 2px; }
.tree i { width: 12px; height: 12px; border: 1px solid #8a8886; border-radius: 2px; margin-bottom: 2px; }
.tree b { width: 26px; padding-left: 8px; display: flex; margin-bottom: 2px; }

/* status bar */
.status { height: 20px; flex: none; border-top: 1px solid #dcdad8; display: flex; justify-content: space-between; color: #484644; }
.count { font-size: 11.800px; line-height: 16px; padding-top: 3px; height: 19px; }
.zoom { display: flex; align-items: center; gap: 4px; padding: 4px 6px 0 0; line-height: 16px; height: 19px; }
.slider { margin-right: 2px; }
.pct { margin: 0 15px 0 10px; letter-spacing: -.3px; }

/* annotations drawn above the app */
.notes { position: absolute; left: 0; top: 0; z-index: 2; }
.notes text { font: 300 20px "Liberation Serif", "Noto Sans CJK SC", serif; fill: #ed1c24; }
```
